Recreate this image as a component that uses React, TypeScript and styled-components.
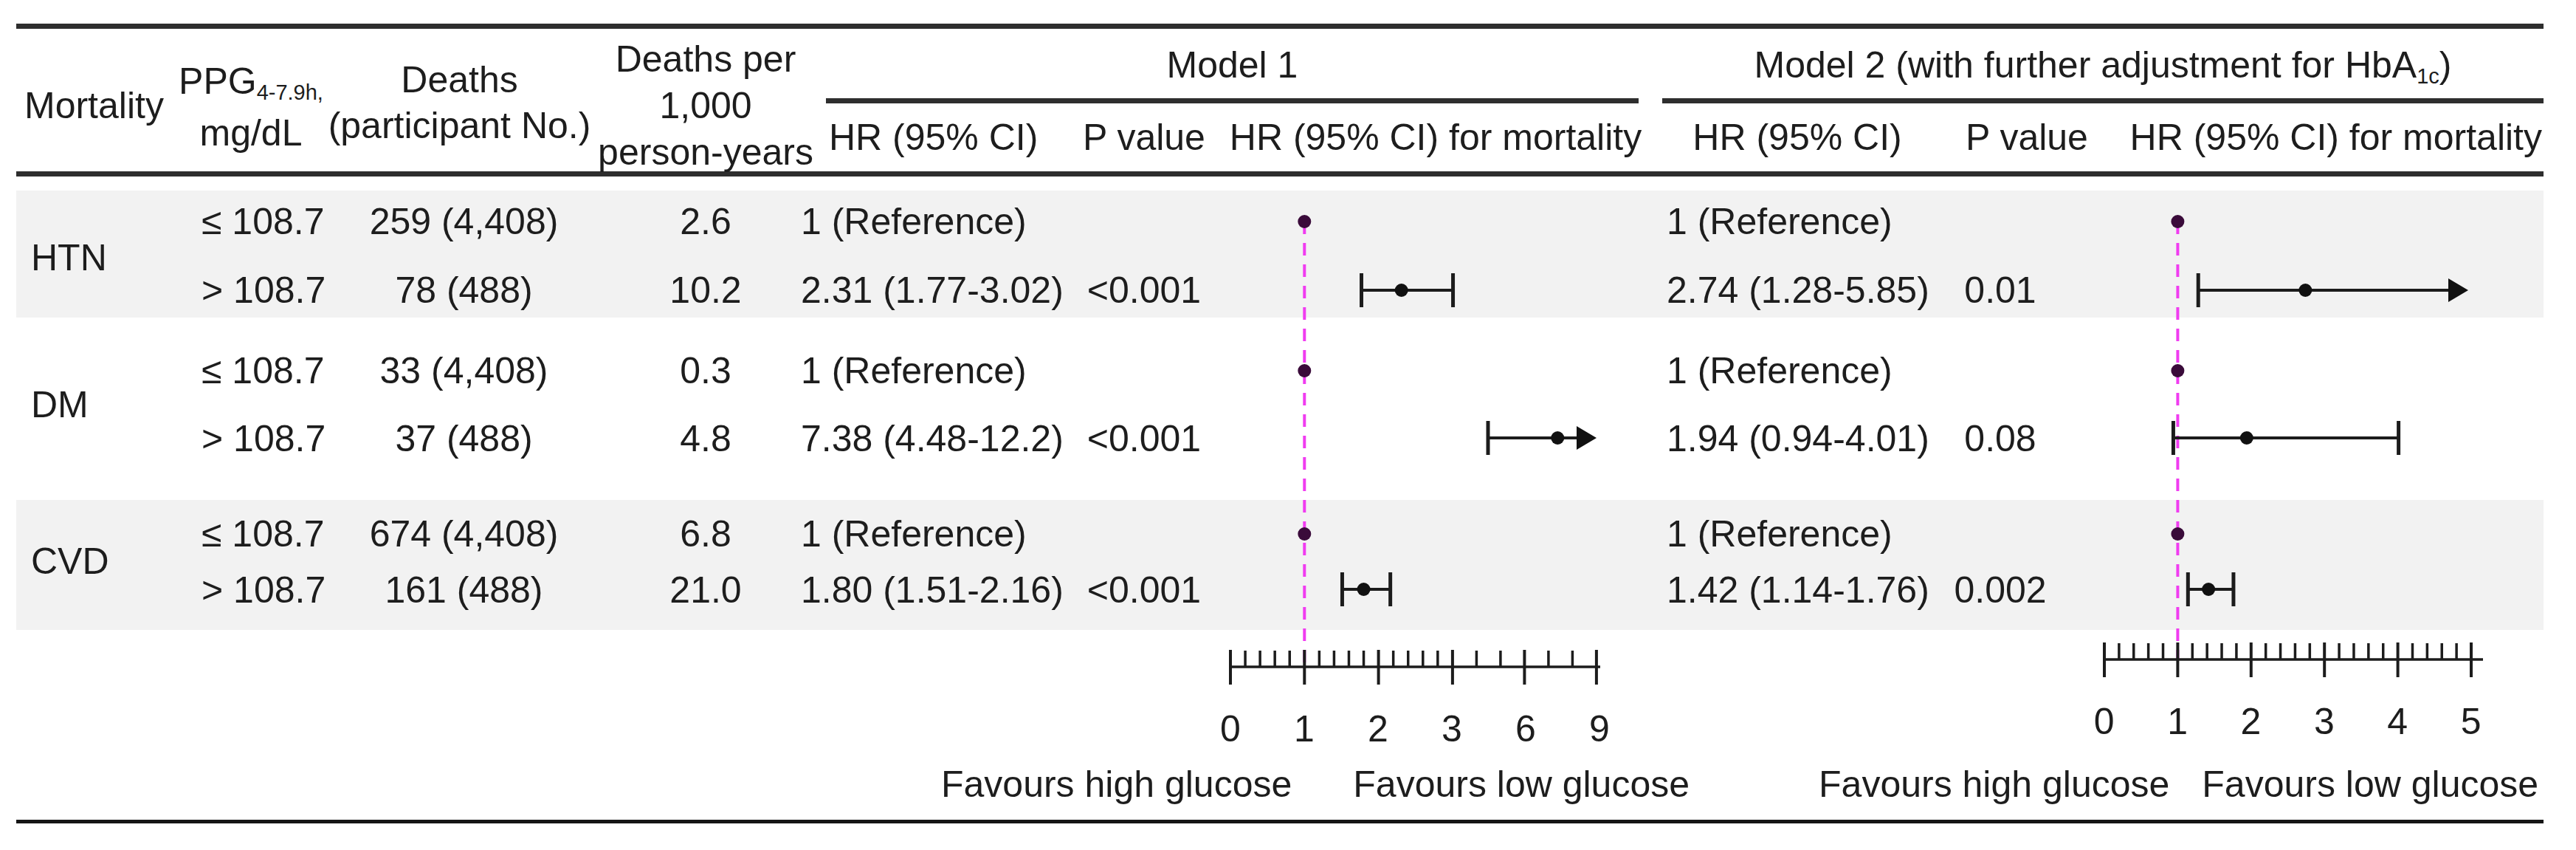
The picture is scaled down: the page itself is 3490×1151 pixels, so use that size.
import React from "react";
import styled, { createGlobalStyle } from "styled-components";

const GlobalStyle = createGlobalStyle`
  html, body {
    margin: 0;
    padding: 0;
    background: #ffffff;
  }
  body {
    font-family: "Liberation Sans", Arial, Helvetica, sans-serif;
    font-size: 50px;
    line-height: 58px;
    color: #1d1d1d;
  }
`;

// column widths shared by header and body
const COLUMNS = "203px 230px 335px 290px 370px 200px 590px 390px 160px 656px";
const PLOT_H = 682;

const Page = styled.div`
  width: 3424px;
  padding: 32px 0 40px 22px;
`;

const Rule = styled.div<{ $h?: number; $color?: string; $mt?: number }>`
  height: ${(p) => p.$h ?? 7}px;
  margin-top: ${(p) => p.$mt ?? 0}px;
  background: ${(p) => p.$color ?? "#2e2e2e"};
`;

const HeaderGrid = styled.div`
  display: grid;
  grid-template-columns: ${COLUMNS};
  grid-template-rows: 101px 92px;
`;

const StackHead = styled.div<{ $col: number; $left?: boolean; $pl?: number; $pt?: number; $lh?: number }>`
  grid-column: ${(p) => p.$col};
  grid-row: 1 / 3;
  display: flex;
  flex-direction: column;
  justify-content: center;
  align-items: ${(p) => (p.$left ? "flex-start" : "center")};
  padding: ${(p) => p.$pt ?? 0}px 0 0 ${(p) => p.$pl ?? 0}px;
  line-height: ${(p) => p.$lh ?? 58}px;
  white-space: nowrap;
`;

const Sub = styled.sub`
  font-size: 29px;
  line-height: 0;
  vertical-align: -8px;
`;

const ModelHead = styled.div<{ $span: string; $ml?: number; $mr?: number }>`
  grid-column: ${(p) => p.$span};
  grid-row: 1;
  display: flex;
  flex-direction: column;
  justify-content: flex-end;
  padding: 0 ${(p) => p.$mr ?? 0}px 0 ${(p) => p.$ml ?? 0}px;
`;

const ModelTitle = styled.div`
  text-align: center;
  white-space: nowrap;
  margin-bottom: 16px;
`;

const ModelRule = styled.div`
  height: 7px;
  background: #2e2e2e;
`;

const SubHead = styled.div<{ $col: number; $justify?: string; $pl?: number; $pr?: number }>`
  grid-column: ${(p) => p.$col};
  grid-row: 2;
  display: flex;
  align-items: center;
  justify-content: ${(p) => p.$justify ?? "center"};
  padding: 0 ${(p) => p.$pr ?? 0}px 0 ${(p) => p.$pl ?? 0}px;
  white-space: nowrap;
`;

const BodyGrid = styled.div`
  display: grid;
  grid-template-columns: ${COLUMNS};
  grid-template-rows: 88px 84px 118px 129px 83px 93px 87px;
  margin-top: 19px;
`;

const Band = styled.div<{ $row: number }>`
  grid-column: 1 / -1;
  grid-row: ${(p) => p.$row} / span 2;
  background: #f2f2f2;
`;

const GroupLabel = styled.div<{ $row: number; $pt?: number; $pb?: number }>`
  grid-column: 1;
  grid-row: ${(p) => p.$row} / span 2;
  display: flex;
  align-items: center;
  padding: ${(p) => p.$pt ?? 0}px 0 ${(p) => p.$pb ?? 0}px 20px;
`;

const Cell = styled.div<{ $col: number; $row: number; $center?: boolean; $pl?: number; $pt?: number; $pb?: number }>`
  grid-column: ${(p) => p.$col};
  grid-row: ${(p) => p.$row};
  display: flex;
  align-items: center;
  justify-content: ${(p) => (p.$center ? "center" : "flex-start")};
  padding: ${(p) => p.$pt ?? 0}px 0 ${(p) => p.$pb ?? 0}px ${(p) => p.$pl ?? 0}px;
  white-space: nowrap;
`;

const Plot = styled.svg<{ $col: number }>`
  grid-column: ${(p) => p.$col};
  grid-row: 1 / 8;
  display: block;
  overflow: visible;
`;

const TickRow = styled.div`
  display: flex;
  align-items: center;
  height: 93px;
  padding-left: 1595px;
`;

const TickGroup = styled.div<{ $gap?: number; $lift?: number }>`
  display: flex;
  margin-left: ${(p) => p.$gap ?? 0}px;
  padding-bottom: ${(p) => (p.$lift ?? 0) * 2}px;
`;

const TickLabel = styled.span<{ $w: number }>`
  width: ${(p) => p.$w}px;
  text-align: center;
`;

const FavourRow = styled.div`
  display: flex;
  height: 58px;
  padding-left: 1253px;
`;

const Favour = styled.span<{ $gap?: number }>`
  margin-left: ${(p) => p.$gap ?? 0}px;
  white-space: nowrap;
`;

type DataRow = { ppg: string; deaths: string; rate: string; hr1: string; p1: string; hr2: string; p2: string };
type Group = { name: string; shaded: boolean; labelPad: { pt?: number; pb?: number }; rows: DataRow[] };

const groups: Group[] = [
  {
    name: "HTN",
    shaded: true,
    labelPad: { pt: 10 },
    rows: [
      { ppg: "≤ 108.7", deaths: "259 (4,408)", rate: "2.6", hr1: "1 (Reference)", p1: "", hr2: "1 (Reference)", p2: "" },
      { ppg: "> 108.7", deaths: "78 (488)", rate: "10.2", hr1: "2.31 (1.77-3.02)", p1: "<0.001", hr2: "2.74 (1.28-5.85)", p2: "0.01" },
    ],
  },
  {
    name: "DM",
    shaded: false,
    labelPad: { pb: 11 },
    rows: [
      { ppg: "≤ 108.7", deaths: "33 (4,408)", rate: "0.3", hr1: "1 (Reference)", p1: "", hr2: "1 (Reference)", p2: "" },
      { ppg: "> 108.7", deaths: "37 (488)", rate: "4.8", hr1: "7.38 (4.48-12.2)", p1: "<0.001", hr2: "1.94 (0.94-4.01)", p2: "0.08" },
    ],
  },
  {
    name: "CVD",
    shaded: true,
    labelPad: { pb: 10 },
    rows: [
      { ppg: "≤ 108.7", deaths: "674 (4,408)", rate: "6.8", hr1: "1 (Reference)", p1: "", hr2: "1 (Reference)", p2: "" },
      { ppg: "> 108.7", deaths: "161 (488)", rate: "21.0", hr1: "1.80 (1.51-2.16)", p1: "<0.001", hr2: "1.42 (1.14-1.76)", p2: "0.002" },
    ],
  },
];

// vertical padding that puts each text row at its line in the figure
const rowPads = [{ pb: 4 }, { pt: 10 }, { pt: 26 }, { pb: 38 }, { pt: 9 }, { pb: 16 }];

type Bar = { y: number; lo: number; est: number; hi?: number; tip?: number };
type PlotSpec = {
  col: number;
  width: number;
  scale: (v: number) => number;
  axisY: number;
  axisTo: number;
  majors: number[];
  minors: number[];
  refs: number[];
  bars: Bar[];
};

const steps = (from: number, to: number, step: number) => {
  const out: number[] = [];
  for (let v = from; v <= to + 1e-6; v += step) {
    const r = Math.round(v * 10) / 10;
    if (Math.abs(r - Math.round(r)) > 1e-6) out.push(r);
  }
  return out;
};

const model1: PlotSpec = {
  col: 7,
  width: 590,
  scale: (v) => (v <= 3 ? 17 + v * 100.3 : 317.9 + (v - 3) * 32.5),
  axisY: 645,
  axisTo: 518,
  majors: [0, 1, 2, 3, 6, 9],
  minors: [...steps(0, 3, 0.2), 4, 5, 7, 8],
  refs: [42, 244, 465],
  bars: [
    { y: 135, lo: 1.77, est: 2.31, hi: 3.02 },
    { y: 335, lo: 4.48, est: 7.38, tip: 513 },
    { y: 540, lo: 1.51, est: 1.8, hi: 2.16 },
  ],
};

const model2: PlotSpec = {
  col: 10,
  width: 656,
  scale: (v) => 61 + v * 99.4,
  axisY: 635,
  axisTo: 574,
  majors: [0, 1, 2, 3, 4, 5],
  minors: steps(0, 5, 0.2),
  refs: [42, 244, 465],
  bars: [
    { y: 135, lo: 1.28, est: 2.74, tip: 554 },
    { y: 335, lo: 0.94, est: 1.94, hi: 4.01 },
    { y: 540, lo: 1.14, est: 1.42, hi: 1.76 },
  ],
};

const INK = "#1c1c1c";

const ForestPlot = ({ spec }: { spec: PlotSpec }) => {
  const { scale, axisY } = spec;
  const one = scale(1);
  return (
    <Plot $col={spec.col} width={spec.width} height={PLOT_H} viewBox={`0 0 ${spec.width} ${PLOT_H}`}>
      <line x1={one} x2={one} y1={spec.refs[0]} y2={axisY} stroke="#f03cf0" strokeWidth={4} strokeDasharray="17 12" />
      {spec.refs.map((y) => (
        <circle key={y} cx={one} cy={y} r={9} fill="#3a0b3a" />
      ))}
      {spec.bars.map((b) => {
        const lo = scale(b.lo);
        const est = scale(b.est);
        const hi = b.tip !== undefined ? b.tip - 27 : scale(b.hi ?? b.est);
        return (
          <g key={b.y}>
            <line x1={lo} x2={hi} y1={b.y} y2={b.y} stroke={INK} strokeWidth={4} />
            <line x1={lo} x2={lo} y1={b.y - 23} y2={b.y + 23} stroke={INK} strokeWidth={5} />
            {b.tip !== undefined ? (
              <polygon points={`${hi},${b.y - 16} ${b.tip},${b.y} ${hi},${b.y + 16}`} fill="#111" />
            ) : (
              <line x1={hi} x2={hi} y1={b.y - 23} y2={b.y + 23} stroke={INK} strokeWidth={5} />
            )}
            <circle cx={est} cy={b.y} r={9} fill="#111" />
          </g>
        );
      })}
      <line x1={scale(0) - 2} x2={spec.axisTo} y1={axisY} y2={axisY} stroke={INK} strokeWidth={3.5} />
      {spec.majors.map((v) => (
        <line key={`M${v}`} x1={scale(v)} x2={scale(v)} y1={axisY - 23} y2={axisY + 24} stroke={INK} strokeWidth={4} />
      ))}
      {spec.minors.map((v) => (
        <line key={`m${v}`} x1={scale(v)} x2={scale(v)} y1={axisY - 22} y2={axisY} stroke={INK} strokeWidth={3.5} />
      ))}
    </Plot>
  );
};

const App = () => {
  return (
    <Page>
      <GlobalStyle />
      <Rule />
      <HeaderGrid>
        <StackHead $col={1} $left $pl={11} $pt={15}>
          Mortality
        </StackHead>
        <StackHead $col={2} $pt={19} $lh={70}>
          <span>
            PPG<Sub>4-7.9h,</Sub>
          </span>
          <span>mg/dL</span>
        </StackHead>
        <StackHead $col={3} $pt={7} $lh={62}>
          <span>Deaths</span>
          <span>(participant No.)</span>
        </StackHead>
        <StackHead $col={4} $pt={16} $pl={42} $lh={63}>
          <span>Deaths per</span>
          <span>1,000</span>
          <span>person-years</span>
        </StackHead>

        <ModelHead $span="5 / 8" $ml={39} $mr={20}>
          <ModelTitle>Model 1</ModelTitle>
          <ModelRule />
        </ModelHead>
        <ModelHead $span="8 / 11" $ml={12}>
          <ModelTitle>
            Model 2 (with further adjustment for HbA<Sub>1c</Sub>)
          </ModelTitle>
          <ModelRule />
        </ModelHead>

        <SubHead $col={5} $justify="flex-start" $pl={43}>
          HR (95% CI)
        </SubHead>
        <SubHead $col={6}>P value</SubHead>
        <SubHead $col={7}>HR (95% CI) for mortality</SubHead>
        <SubHead $col={8}>HR (95% CI)</SubHead>
        <SubHead $col={9} $pl={72}>
          P value
        </SubHead>
        <SubHead $col={10} $justify="flex-end" $pr={2}>
          HR (95% CI) for mortality
        </SubHead>
      </HeaderGrid>
      <Rule />

      <BodyGrid>
        {groups.map((g, gi) => (g.shaded ? <Band key={`b${g.name}`} $row={gi * 2 + 1} /> : null))}
        {groups.map((g, gi) => (
          <GroupLabel key={`l${g.name}`} $row={gi * 2 + 1} $pt={g.labelPad.pt} $pb={g.labelPad.pb}>
            {g.name}
          </GroupLabel>
        ))}
        {groups.flatMap((g, gi) =>
          g.rows.map((r, ri) => {
            const row = gi * 2 + ri + 1;
            const pad = { $pt: rowPads[row - 1].pt, $pb: rowPads[row - 1].pb };
            return (
              <React.Fragment key={`${g.name}${ri}`}>
                <Cell $col={2} $row={row} $pl={48} {...pad}>
                  {r.ppg}
                </Cell>
                <Cell $col={3} $row={row} $center $pl={12} {...pad}>
                  {r.deaths}
                </Cell>
                <Cell $col={4} $row={row} $center $pl={42} {...pad}>
                  {r.rate}
                </Cell>
                <Cell $col={5} $row={row} $pl={5} {...pad}>
                  {r.hr1}
                </Cell>
                <Cell $col={6} $row={row} $center {...pad}>
                  {r.p1}
                </Cell>
                <Cell $col={8} $row={row} $pl={18} {...pad}>
                  {r.hr2}
                </Cell>
                <Cell $col={9} $row={row} $center {...pad}>
                  {r.p2}
                </Cell>
              </React.Fragment>
            );
          })
        )}
        <ForestPlot spec={model1} />
        <ForestPlot spec={model2} />
      </BodyGrid>

      <TickRow>
        <TickGroup>
          {["0", "1", "2", "3", "6", "9"].map((t) => (
            <TickLabel key={t} $w={100}>
              {t}
            </TickLabel>
          ))}
        </TickGroup>
        <TickGroup $gap={584} $lift={10}>
          {["0", "1", "2", "3", "4", "5"].map((t) => (
            <TickLabel key={t} $w={99.4}>
              {t}
            </TickLabel>
          ))}
        </TickGroup>
      </TickRow>
      <FavourRow>
        <Favour>Favours high glucose</Favour>
        <Favour $gap={83}>Favours low glucose</Favour>
        <Favour $gap={175}>Favours high glucose</Favour>
        <Favour $gap={44}>Favours low glucose</Favour>
      </FavourRow>
      <Rule $h={5} $mt={19} $color="#151515" />
    </Page>
  );
};

export default App;
